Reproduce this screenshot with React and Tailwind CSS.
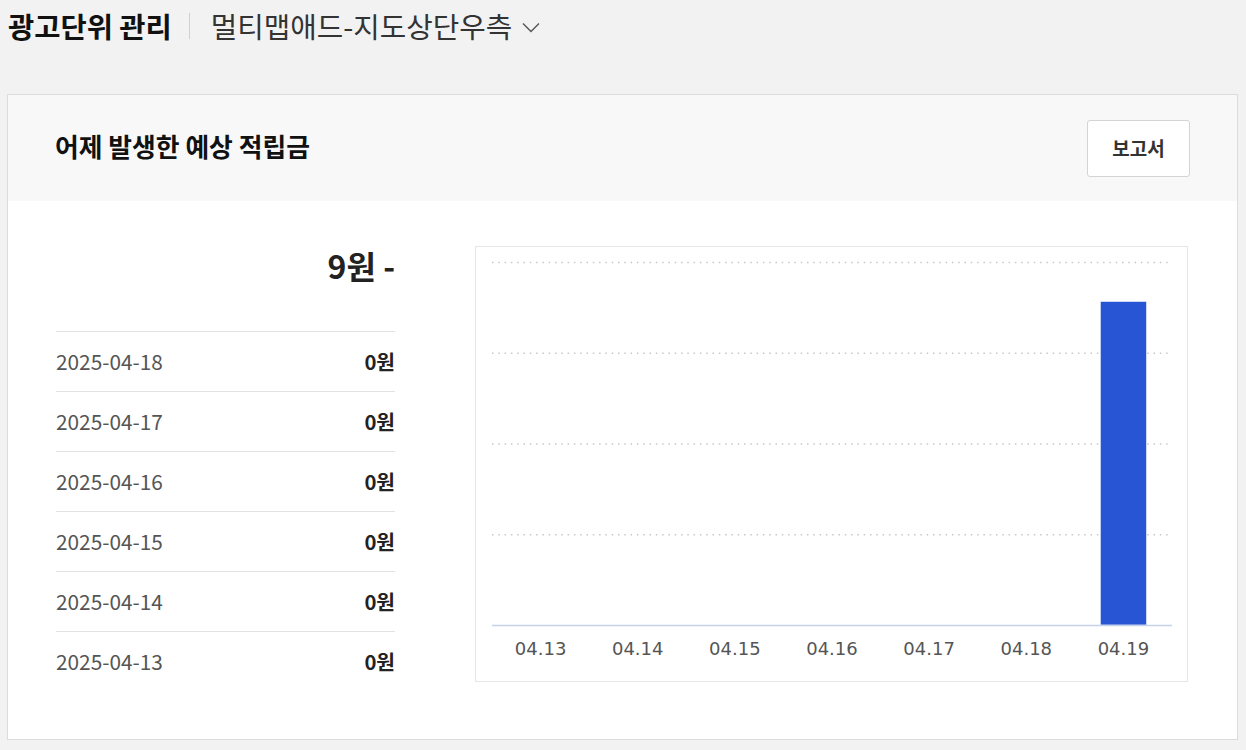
const rows = [
  { date: '2025-04-18', amount: '0원' },
  { date: '2025-04-17', amount: '0원' },
  { date: '2025-04-16', amount: '0원' },
  { date: '2025-04-15', amount: '0원' },
  { date: '2025-04-14', amount: '0원' },
  { date: '2025-04-13', amount: '0원' }
];

const chartData = [
  { label: '04.13', value: 0 },
  { label: '04.14', value: 0 },
  { label: '04.15', value: 0 },
  { label: '04.16', value: 0 },
  { label: '04.17', value: 0 },
  { label: '04.18', value: 0 },
  { label: '04.19', value: 9 }
];

function RewardChart() {
  const plotLeft = 16;
  const plotWidth = 680;
  const plotTop = 15;
  const axisY = 378;
  const max = 10.1;
  const colWidth = plotWidth / chartData.length;
  const grid = [0, 1, 2, 3].map((i) => plotTop + i * ((axisY - plotTop) / 4));

  return (
    <div className="w-[713px] h-[436px] border border-[#e6e6e6] bg-white">
      <svg width="711" height="384" className="block">
        {grid.map((y) => (
          <line
            key={y}
            x1={plotLeft}
            x2={plotLeft + plotWidth}
            y1={y + 0.5}
            y2={y + 0.5}
            stroke="#c8c8c8"
            strokeWidth="1.3"
            strokeDasharray="1.5 4.8"
          />
        ))}
        {chartData.map((d, i) => {
          if (!d.value) return null;
          const h = ((axisY - plotTop) * d.value) / max;
          const cx = plotLeft + colWidth * i + colWidth / 2;
          return (
            <rect
              key={d.label}
              x={cx - 23}
              y={axisY - h}
              width="46"
              height={h}
              fill="#2855d4"
              stroke="#ffffff"
              strokeWidth="0.5"
            />
          );
        })}
        <line
          x1={plotLeft}
          x2={plotLeft + plotWidth}
          y1={axisY + 0.5}
          y2={axisY + 0.5}
          stroke="#c6d2ea"
          strokeWidth="1.5"
        />
      </svg>
      <div className="ml-[16px] w-[680px] grid grid-cols-7 mt-[8px]">
        {chartData.map((d) => (
          <span
            key={d.label}
            className="text-center font-['DejaVu_Sans',sans-serif] text-[18px] leading-[20px] text-[#555]"
          >
            {d.label}
          </span>
        ))}
      </div>
    </div>
  );
}

export default function App() {
  return (
    <div className="min-h-[750px] bg-[#f2f2f2] font-['Noto_Sans_CJK_KR','Noto_Sans',sans-serif] text-[#222]">
      <div className="flex items-center h-[52px] pl-[8px]">
        <h1 className="text-[28.5px] font-bold leading-[38px] text-[#111]">광고단위 관리</h1>
        <span className="ml-[17px] mr-[21px] h-[26px] w-px bg-[#d0d0d0]" />
        <button type="button" className="flex items-center text-[28.8px] leading-[38px] text-[#333]">
          멀티맵애드-지도상단우측
          <svg width="18" height="11" viewBox="0 0 18 11" className="ml-[10px] mt-[3px]">
            <polyline points="1,1.5 9,9.5 17,1.5" fill="none" stroke="#555" strokeWidth="1.4" />
          </svg>
        </button>
      </div>

      <div className="mt-[42px] ml-[7px] mr-[8px] border border-[#dcdcdc] bg-white">
        <div className="flex items-center justify-between h-[106px] bg-[#f8f8f8] pl-[47px] pr-[47px]">
          <h2 className="text-[25.8px] font-bold leading-[32px] text-[#111] -mt-[4px]">어제 발생한 예상 적립금</h2>
          <button
            type="button"
            className="w-[103px] h-[57px] rounded-[3px] border border-[#d4d4d4] bg-white text-[19px] font-bold text-[#333]"
          >
            보고서
          </button>
        </div>

        <div className="flex items-start pt-[45px] pb-[48px] pl-[48px]">
          <div className="w-[339px]">
            <div className="h-[85px] text-right text-[32px] font-bold leading-[38px] text-[#222]">9원 -</div>
            {rows.map((row) => (
              <div key={row.date} className="flex items-center justify-between h-[60px] border-t border-[#e2e2e2]">
                <span className="text-[20.8px] text-[#555]">{row.date}</span>
                <span className="text-[20.3px] font-bold text-[#222]">{row.amount}</span>
              </div>
            ))}
          </div>
          <div className="ml-[80px]">
            <RewardChart />
          </div>
        </div>
      </div>
    </div>
  );
}
